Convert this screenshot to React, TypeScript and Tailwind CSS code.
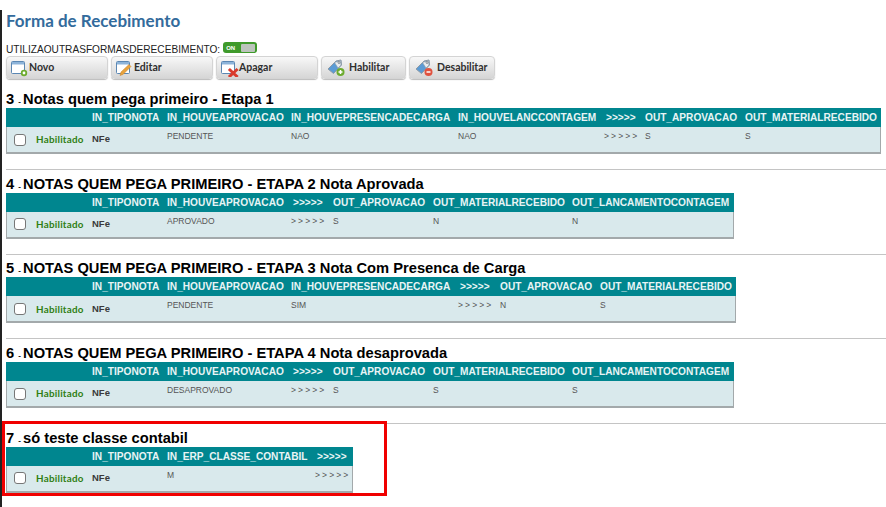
type Col = { label: string; value: string; width: number }

type Section = {
  num: number
  title: string
  width: number
  cols: Col[]
}

const sections: Section[] = [
  {
    num: 3,
    title: 'Notas quem pega primeiro - Etapa 1',
    width: 875,
    cols: [
      { label: 'IN_TIPONOTA', value: '', width: 75 },
      { label: 'IN_HOUVEAPROVACAO', value: 'PENDENTE', width: 124 },
      { label: 'IN_HOUVEPRESENCADECARGA', value: 'NAO', width: 167 },
      { label: 'IN_HOUVELANCCONTAGEM', value: 'NAO', width: 146 },
      { label: '>>>>>', value: '>>>>>', width: 41 },
      { label: 'OUT_APROVACAO', value: 'S', width: 100 },
      { label: 'OUT_MATERIALRECEBIDO', value: 'S', width: 136 },
    ],
  },
  {
    num: 4,
    title: 'NOTAS QUEM PEGA PRIMEIRO - ETAPA 2 Nota Aprovada',
    width: 728,
    cols: [
      { label: 'IN_TIPONOTA', value: '', width: 75 },
      { label: 'IN_HOUVEAPROVACAO', value: 'APROVADO', width: 124 },
      { label: '>>>>>', value: '>>>>>', width: 42 },
      { label: 'OUT_APROVACAO', value: 'S', width: 100 },
      { label: 'OUT_MATERIALRECEBIDO', value: 'N', width: 139 },
      { label: 'OUT_LANCAMENTOCONTAGEM', value: 'N', width: 162 },
    ],
  },
  {
    num: 5,
    title: 'NOTAS QUEM PEGA PRIMEIRO - ETAPA 3 Nota Com Presenca de Carga',
    width: 730,
    cols: [
      { label: 'IN_TIPONOTA', value: '', width: 75 },
      { label: 'IN_HOUVEAPROVACAO', value: 'PENDENTE', width: 124 },
      { label: 'IN_HOUVEPRESENCADECARGA', value: 'SIM', width: 167 },
      { label: '>>>>>', value: '>>>>>', width: 42 },
      { label: 'OUT_APROVACAO', value: 'N', width: 100 },
      { label: 'OUT_MATERIALRECEBIDO', value: 'S', width: 136 },
    ],
  },
  {
    num: 6,
    title: 'NOTAS QUEM PEGA PRIMEIRO - ETAPA 4 Nota desaprovada',
    width: 728,
    cols: [
      { label: 'IN_TIPONOTA', value: '', width: 75 },
      { label: 'IN_HOUVEAPROVACAO', value: 'DESAPROVADO', width: 124 },
      { label: '>>>>>', value: '>>>>>', width: 42 },
      { label: 'OUT_APROVACAO', value: 'S', width: 100 },
      { label: 'OUT_MATERIALRECEBIDO', value: 'S', width: 139 },
      { label: 'OUT_LANCAMENTOCONTAGEM', value: 'S', width: 162 },
    ],
  },
  {
    num: 7,
    title: 'só teste classe contabil',
    width: 347,
    cols: [
      { label: 'IN_TIPONOTA', value: '', width: 75 },
      { label: 'IN_ERP_CLASSE_CONTABIL', value: 'M', width: 148 },
      { label: '>>>>>', value: '>>>>>', width: 38 },
    ],
  },
]

function WindowIcon({ badge }: { badge: 'add' | 'edit' | 'del' }) {
  return (
    <svg width="20" height="18" viewBox="0 0 20 18" className="shrink-0 mr-[-5px]">
      <rect x="0.5" y="2.5" width="13" height="12" rx="1" fill="#fff" stroke="#5b87b3" />
      <rect x="1" y="3" width="12" height="2.5" fill="#8db4da" />
      {badge === 'add' && (
        <>
          <circle cx="13" cy="14" r="3.2" fill="#6cab2e" />
          <circle cx="13" cy="14" r="1.4" fill="#fff" />
        </>
      )}
      {badge === 'edit' && <path d="M4 16.5 L5 13 L13 5.5 L15 7.5 L7 15.5 Z" fill="#e8a33d" stroke="#c9822a" strokeWidth="0.5" />}
      {badge === 'del' && (
        <path d="M9 11 L15.5 17 M15.5 11 L9 17" stroke="#d93a2b" strokeWidth="3" strokeLinecap="square" />
      )}
    </svg>
  )
}

function TagIcon({ add }: { add: boolean }) {
  return (
    <svg width="20" height="20" viewBox="0 0 20 20" className="shrink-0">
      <path d="M2 11 L10 3 L15 2 L15.5 7 L7.5 15.5 Z" fill="#5b9bd5" stroke="#8d9aa6" strokeWidth="1" />
      <path d="M8.5 4.5 L14.5 2.5 L15 7 L12 10 Z" fill="#e8ecef" stroke="#8d9aa6" strokeWidth="0.6" />
      <circle cx="13" cy="4.5" r="1" fill="none" stroke="#6d7780" strokeWidth="0.8" />
      <circle cx="14.5" cy="14" r="4" fill={add ? '#6cab2e' : '#e0523f'} />
      {add ? (
        <path d="M12.5 14 H16.5 M14.5 12 V16" stroke="#fff" strokeWidth="1.5" />
      ) : (
        <path d="M12.5 14 H16.5" stroke="#fff" strokeWidth="1.5" />
      )}
    </svg>
  )
}

function ToolButton({ icon, label, width }: { icon: React.ReactNode; label: string; width: string }) {
  return (
    <div
      className={`${width} h-[23px] flex items-center gap-[3px] pl-[4px] rounded-[4px] border border-[#d4d4d4] bg-gradient-to-b from-[#f8f8f8] to-[#d6d6d6] text-[10.5px] font-bold text-[#2f2f2f] shadow-[0_1px_1px_#bbb]`}
      style={{ fontFamily: 'Lato, sans-serif' }}
    >
      {icon}
      <span>{label}</span>
    </div>
  )
}

function Grid({ section }: { section: Section }) {
  return (
    <div style={{ width: section.width }}>
      <div className="flex h-[19px] items-center bg-[#00868f] text-[10.15px] font-bold text-[#e8f4f5] whitespace-nowrap">
        <div className="w-[86px] shrink-0" />
        {section.cols.map((c) => (
          <div
            key={c.label}
            className={`shrink-0 ${c.label === '>>>>>' ? 'pl-[2px]' : ''}`}
            style={{ width: c.width }}
          >
            {c.label}
          </div>
        ))}
      </div>
      <div className="flex h-[27px] items-start bg-[#d9e9ec] border-r border-b-2 border-l border-[#a3a9ab] whitespace-nowrap">
        <div className="w-[85px] shrink-0 h-full flex items-center pl-[7px]">
          <span className="w-[12px] h-[12px] rounded-[3px] bg-white border border-[#777] shrink-0" />
          <span
            className="ml-[10px] text-[9.8px] tracking-[0.25px] font-bold text-[#2f7f12]"
            style={{ fontFamily: 'Lato, sans-serif' }}
          >
            Habilitado
          </span>
        </div>
        {section.cols.map((c, i) => (
          <div
            key={c.label}
            className={`shrink-0 ${i === 0 ? 'h-full flex items-center text-[9.5px] font-bold text-[#3a3a3a]' : 'pt-[3px] text-[8.5px] text-[#555]'}`}
            style={{ width: c.width, letterSpacing: c.value === '>>>>>' ? '2.1px' : undefined }}
          >
            {i === 0 ? 'NFe' : c.value}
          </div>
        ))}
      </div>
    </div>
  )
}

export default function App() {
  return (
    <div
      className="relative w-[886px] h-[507px] overflow-hidden bg-white pl-[6px] pt-[10px] text-black"
      style={{ fontFamily: '"Liberation Sans", Arial, sans-serif' }}
    >
      <div className="absolute left-0 top-[10px] bottom-0 w-[1.5px] bg-[#222]" />

      <h1
        className="h-[22px] text-[17px] leading-[22px] font-bold text-[#336b9c]"
        style={{ fontFamily: 'Lato, sans-serif' }}
      >
        Forma de Recebimento
      </h1>

      <div className="mt-[10px] flex h-[14px] items-start text-[10.15px] leading-[14px] text-[#222]">
        <span className="mt-[1px]">UTILIZAOUTRASFORMASDERECEBIMENTO:</span>
        <span className="ml-[3px] flex h-[11px] w-[34px] items-center rounded-[3px] bg-[#3f9a2b] pl-[3px]">
          <span className="text-[6px] font-bold leading-none text-white">ON</span>
          <span className="ml-[6px] h-[8px] w-[14px] rounded-[1px] bg-[#bcc4bc]" />
        </span>
      </div>

      <div className="flex gap-[3px]">
        <ToolButton icon={<WindowIcon badge="add" />} label="Novo" width="w-[102px]" />
        <ToolButton icon={<WindowIcon badge="edit" />} label="Editar" width="w-[102px]" />
        <ToolButton icon={<WindowIcon badge="del" />} label="Apagar" width="w-[102px]" />
        <ToolButton icon={<TagIcon add />} label="Habilitar" width="w-[85px]" />
        <ToolButton icon={<TagIcon add={false} />} label="Desabilitar" width="w-[86px]" />
      </div>

      <div className="mt-[11px] flex flex-col">
        {sections.map((s, i) => (
          <div key={s.num} className={i === sections.length - 1 ? '' : 'h-[85px] mb-[-0.3px]'}>
            <h2 className="h-[18px] text-[14.7px] leading-[18px] font-bold whitespace-nowrap">
              {s.num} <span className="text-[8px] mr-[-2px]">-</span> {s.title}
            </h2>
            <Grid section={s} />
            {i < sections.length - 1 && <div className="mt-[15px] h-px w-[880px] bg-[#c4c4c4]" />}
          </div>
        ))}
      </div>

      <div className="absolute left-[2px] top-[421px] h-[75px] w-[385px] border-[3px] border-[#f00000]" />
    </div>
  )
}
